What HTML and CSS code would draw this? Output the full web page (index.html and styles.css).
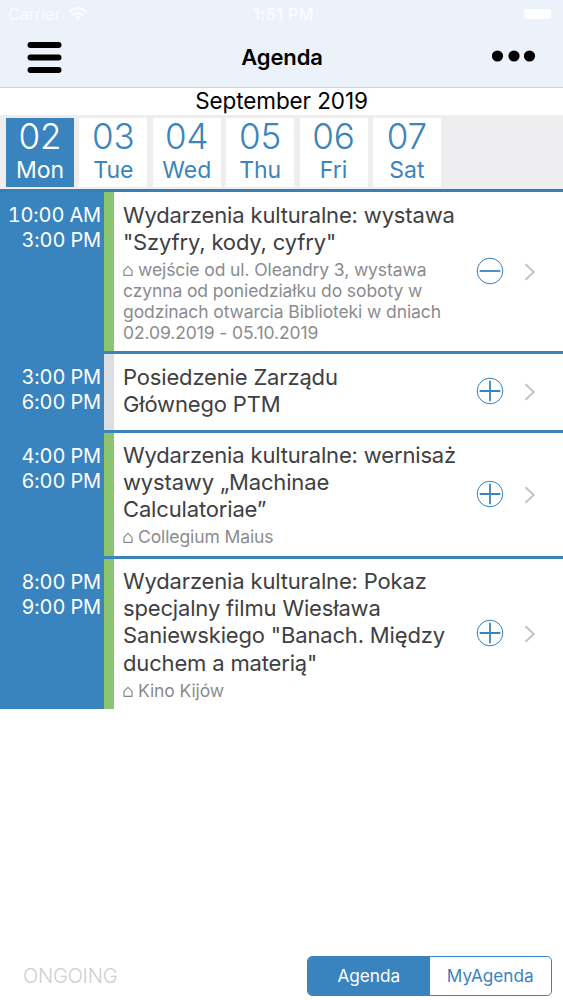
FILE: index.html
```html
<!DOCTYPE html>
<html lang="pl">
<head>
    <meta charset="utf-8">
    <title>Agenda</title>
    <link rel="stylesheet" href="styles.css">
</head>
<body>
    <svg class="symbols" width="0" height="0">
        <symbol id="home" viewBox="0 0 10 11">
            <path d="M1 5.400 5 1.400 9 5.400V10.300H1Z" fill="none" stroke="currentColor" stroke-width="1.200"/>
        </symbol>
        <symbol id="plus" viewBox="0 0 28 28">
            <circle cx="14" cy="14" r="12.8" fill="none" stroke="currentColor" stroke-width="1"/>
            <path d="M3.7 14H24.3M14 3.7V24.3" stroke="currentColor" stroke-width="1.8"/>
        </symbol>
        <symbol id="minus" viewBox="0 0 28 28">
            <circle cx="14" cy="14" r="12.8" fill="none" stroke="currentColor" stroke-width="1"/>
            <path d="M3.7 14H24.3" stroke="currentColor" stroke-width="1.8"/>
        </symbol>
        <symbol id="chevron" viewBox="0 0 12 18">
            <path d="M1.5 1.2 9.7 9 1.5 16.8" fill="none" stroke="currentColor" stroke-width="2"/>
        </symbol>
    </svg>

    <header class="header">
        <div class="status">
            <div class="carrier">
                <span>Carrier</span>
                <svg width="20" height="14" viewBox="0 0 20 14" fill="none" stroke="currentColor" stroke-width="2.6">
                    <path d="M1.5 5Q10-2.500 18.500 5M4.800 8.300Q10 3.800 15.200 8.300"/>
                    <path d="M7 10.300Q10 7.800 13 10.300L10 13.300Z" fill="currentColor" stroke="none"/>
                </svg>
            </div>
            <span class="clock">1:51 PM</span>
            <div class="battery"></div>
        </div>
        <div class="navbar">
            <svg width="36" height="34" viewBox="0 0 36 34" stroke="#000" stroke-width="6" stroke-linecap="round">
                <path d="M4.500 5H32.500M4.500 17.500H32.500M4.500 30H32.500"/>
            </svg>
            <h1 class="title">Agenda</h1>
            <svg width="46" height="14" viewBox="0 0 46 14">
                <circle cx="5.500" cy="6" r="5.600"/>
                <circle cx="22" cy="6" r="5.600"/>
                <circle cx="37.500" cy="6" r="5.600"/>
            </svg>
        </div>
    </header>

    <div class="month">September 2019</div>

    <nav class="days">
        <div class="day active"><span class="num">02</span><span class="name">Mon</span></div>
        <div class="day"><span class="num">03</span><span class="name">Tue</span></div>
        <div class="day"><span class="num">04</span><span class="name">Wed</span></div>
        <div class="day"><span class="num">05</span><span class="name">Thu</span></div>
        <div class="day"><span class="num">06</span><span class="name">Fri</span></div>
        <div class="day"><span class="num">07</span><span class="name">Sat</span></div>
    </nav>

    <main class="list">
        <div class="event event1">
            <div class="time">10:00 AM<br>3:00 PM</div>
            <div class="info green">
                <div class="text">
                    <h2>Wydarzenia kulturalne: wystawa<br>"Szyfry, kody, cyfry"</h2>
                    <p><svg class="home"><use href="#home"/></svg>wejście od ul. Oleandry 3, wystawa<br>czynna od poniedziałku do soboty w<br>godzinach otwarcia Biblioteki w dniach<br>02.09.2019 - 05.10.2019</p>
                </div>
                <svg class="toggle"><use href="#minus"/></svg>
                <svg class="chevron"><use href="#chevron"/></svg>
            </div>
        </div>
        <div class="event event2">
            <div class="time">3:00 PM<br>6:00 PM</div>
            <div class="info grey">
                <div class="text">
                    <h2>Posiedzenie Zarządu<br>Głównego PTM</h2>
                </div>
                <svg class="toggle"><use href="#plus"/></svg>
                <svg class="chevron"><use href="#chevron"/></svg>
            </div>
        </div>
        <div class="event event3">
            <div class="time">4:00 PM<br>6:00 PM</div>
            <div class="info green">
                <div class="text">
                    <h2>Wydarzenia kulturalne: wernisaż<br>wystawy „Machinae<br>Calculatoriae”</h2>
                    <p><svg class="home"><use href="#home"/></svg>Collegium Maius</p>
                </div>
                <svg class="toggle"><use href="#plus"/></svg>
                <svg class="chevron"><use href="#chevron"/></svg>
            </div>
        </div>
        <div class="event event4">
            <div class="time">8:00 PM<br>9:00 PM</div>
            <div class="info green">
                <div class="text">
                    <h2>Wydarzenia kulturalne: Pokaz<br>specjalny filmu Wiesława<br>Saniewskiego "Banach. Między<br>duchem a materią"</h2>
                    <p><svg class="home"><use href="#home"/></svg>Kino Kijów</p>
                </div>
                <svg class="toggle"><use href="#plus"/></svg>
                <svg class="chevron"><use href="#chevron"/></svg>
            </div>
        </div>
    </main>

    <footer class="footer">
        <span class="ongoing">ONGOING</span>
        <div class="tabs">
            <div class="tab selected">Agenda</div>
            <div class="tab">MyAgenda</div>
        </div>
    </footer>
</body>
</html>
```

FILE: styles.css
```css
* {
    box-sizing: border-box;
}
body {
    margin: 0;
    height: 1000px;
    display: flex;
    flex-direction: column;
    overflow: hidden;
    background-color: #fff;
    font-family: Inter, "Liberation Sans", sans-serif;
}
h1, h2, p {
    margin: 0;
    font-weight: 400;
}
svg {
    flex: none;
    display: block;
}
.symbols {
    position: absolute;
}

/* header */
.header {
    height: 88px;
    background-color: #ebf2fa;
    border-bottom: 1px solid #ccd5db;
}
.status {
    height: 28px;
    padding: 0 8px;
    display: grid;
    grid-template-columns: 1fr auto 1fr;
    align-items: center;
    color: #fafdff;
    font-size: 16px;
}
.carrier {
    display: flex;
    gap: 8px;
    align-items: center;
}
.clock {
    font-weight: 600;
    letter-spacing: 0.4px;
    padding-left: 4px;
}
.battery {
    justify-self: end;
    width: 27px;
    height: 10px;
    margin-right: 4px;
    border-radius: 2px;
    background-color: #fff;
}
.navbar {
    height: 57px;
    padding: 0 25px 0 26px;
    display: grid;
    grid-template-columns: 1fr auto 1fr;
    align-items: center;
}
.navbar svg:last-child {
    justify-self: end;
}
.title {
    font-size: 22px;
    font-weight: 600;
    letter-spacing: -0.1px;
}

.month {
    height: 27px;
    line-height: 26px;
    text-align: center;
    font-size: 22.5px;
    letter-spacing: -0.1px;
}

/* day picker */
.days {
    height: 74px;
    padding: 3px 6px 2px;
    display: flex;
    gap: 5.4px;
    background-color: #eeedf0;
}
.day {
    width: 68px;
    display: flex;
    flex-direction: column;
    align-items: center;
    background-color: #fff;
    color: #3b84bc;
}
.day.active {
    background-color: #3984bf;
    color: #fff;
}
.num {
    height: 36px;
    line-height: 37px;
    font-size: 35px;
    font-weight: 300;
}
.name {
    line-height: 32px;
    font-size: 23px;
}

/* events */
.list {
    background-color: #3984bf;
    border-top: 3px solid #3b7eb1;
}
.event {
    display: flex;
    align-items: stretch;
}
.event1 { height: 162px; }
.event2 { height: 79px; }
.event3 { height: 126px; }
.event4 { height: 150px; }
.time {
    width: 104px;
    padding: 11px 3px 0 0;
    text-align: right;
    color: #fff;
    font-size: 20px;
    line-height: 24.5px;
    letter-spacing: -0.15px;
    font-variant-numeric: tabular-nums;
}
.info {
    flex: 1;
    display: flex;
    align-items: center;
    border-left: 10px solid;
    background-color: #fff;
    margin-bottom: 3px;
}
.event4 .info {
    margin-bottom: 0;
}
.green {
    border-left-color: #8cc570;
}
.grey {
    border-left-color: #dddee1;
}
.text {
    align-self: flex-start;
    width: 362px;
    padding: 9.5px 0 0 9px;
    white-space: nowrap;
}
.event3 .text,
.event4 .text {
    padding-top: 8.6px;
}
.text h2 {
    color: #404042;
    font-size: 22px;
    line-height: 27.4px;
    letter-spacing: -0.16px;
}
.text p {
    color: #8b8b8f;
    font-size: 17.5px;
    line-height: 21px;
    padding-top: 2.6px;
    letter-spacing: -0.1px;
}
.home {
    display: inline-block;
    width: 10px;
    height: 11px;
    margin-right: 5px;
}
.toggle {
    width: 28px;
    height: 28px;
    margin-bottom: 2px;
    color: #3984bf;
}
.chevron {
    width: 12px;
    height: 18px;
    margin-left: 20px;
    color: #c3c3c6;
}

/* bottom bar */
.footer {
    margin-top: auto;
    height: 49px;
    padding: 0 11px 0 23px;
    display: flex;
    justify-content: space-between;
    align-items: center;
}
.ongoing {
    color: #cfcdcf;
    font-size: 20px;
    font-weight: 300;
    letter-spacing: -0.2px;
}
.tabs {
    width: 245px;
    height: 40px;
    display: flex;
    border: 1px solid #3984bf;
    border-radius: 5px;
    overflow: hidden;
}
.tab {
    flex: 1;
    line-height: 38px;
    text-align: center;
    font-size: 17.2px;
    color: #3984bf;
}
.tab.selected {
    background-color: #3984bf;
    color: #fff;
}
```
